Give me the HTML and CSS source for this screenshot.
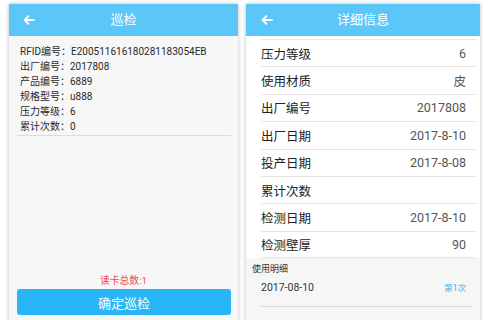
FILE: index.html
```html
<!DOCTYPE html>
<html lang="zh">
<head>
<meta charset="utf-8">
<link rel="stylesheet" href="styles.css">
</head>
<body>
<div class="screens">
  <section class="phone phone-left">
    <header class="bar">
      <span class="back"><svg width="12" height="10" viewBox="0 0 12 10"><path d="M11 5H1.6M5.4 1.2L1.6 5l3.8 3.8" fill="none" stroke="#fff" stroke-width="1.8" stroke-linecap="round" stroke-linejoin="round"/></svg></span>
      <span class="title">巡检</span>
      <span></span>
    </header>
    <div class="info">
      <p>RFID编号<span class="colon">：</span>E200511616180281183054EB</p>
      <p>出厂编号<span class="colon">：</span>2017808</p>
      <p>产品编号<span class="colon">：</span>6889</p>
      <p>规格型号<span class="colon">：</span>u888</p>
      <p>压力等级<span class="colon">：</span>6</p>
      <p>累计次数<span class="colon">：</span>0</p>
    </div>
    <div class="divider"></div>
    <div class="spacer"></div>
    <p class="count">读卡总数:1</p>
    <button class="confirm">确定巡检</button>
  </section>

  <section class="phone phone-right">
    <header class="bar">
      <span class="back"><svg width="12" height="10" viewBox="0 0 12 10"><path d="M11 5H1.6M5.4 1.2L1.6 5l3.8 3.8" fill="none" stroke="#fff" stroke-width="1.8" stroke-linecap="round" stroke-linejoin="round"/></svg></span>
      <span class="title">详细信息</span>
      <span></span>
    </header>
    <div class="rows">
      <div class="row"><span class="label">压力等级</span><span class="value">6</span></div>
      <div class="row"><span class="label">使用材质</span><span class="value">皮</span></div>
      <div class="row"><span class="label">出厂编号</span><span class="value">2017808</span></div>
      <div class="row"><span class="label">出厂日期</span><span class="value">2017-8-10</span></div>
      <div class="row"><span class="label">投产日期</span><span class="value">2017-8-08</span></div>
      <div class="row"><span class="label">累计次数</span><span class="value"></span></div>
      <div class="row"><span class="label">检测日期</span><span class="value">2017-8-10</span></div>
      <div class="row"><span class="label">检测壁厚</span><span class="value">90</span></div>
    </div>
    <div class="usage">
      <p class="usage-title">使用明细</p>
      <div class="record"><span class="date">2017-08-10</span><span class="times">第1次</span></div>
    </div>
  </section>
</div>
</body>
</html>
```
FILE: styles.css
```css
* { box-sizing: border-box; }
html, body {
  margin: 0;
  padding: 0;
  width: 489px;
  height: 320px;
  overflow: hidden;
  background: #fff;
  font-family: Roboto, "Noto Sans CJK SC", sans-serif;
}
p { margin: 0; }

.screens {
  display: flex;
  align-items: flex-start;
  gap: 8px;
  padding: 4px 0 0 9px;
}

.phone {
  height: 330px;
  display: flex;
  flex-direction: column;
  box-shadow: 0 0 4px rgba(0, 0, 0, 0.28);
}
.phone-left {
  width: 229px;
  background: #f7f7f7;
  padding-bottom: 19px;
}
.phone-right { width: 234px; background: #fff; }

.bar {
  height: 32px;
  flex: none;
  background: #5bc7f9;
  display: grid;
  grid-template-columns: 1fr auto 1fr;
  align-items: center;
  color: #fff;
}
.back {
  display: flex;
  align-items: center;
  padding-left: 14px;
}
.phone-right .back { padding-left: 15px; }
.title {
  font-size: 13px;
  line-height: 16px;
}

.info {
  padding: 8px 0 0 11px;
  font-size: 10px;
  line-height: 15px;
  color: #2a2a2a;
}
.colon {
  font-family: "Noto Sans CJK TC", sans-serif;
  line-height: 0;
}
.divider {
  height: 1px;
  flex: none;
  margin: 0.5px 7px 0 8px;
  background: #dcdcdc;
}
.spacer { flex: 1; }
.count {
  text-align: center;
  font-size: 9.8px;
  line-height: 12px;
  color: #ef4b4b;
  margin-bottom: 2px;
}
.confirm {
  flex: none;
  margin: 0 7px 0 8px;
  height: 26px;
  border: 0;
  border-radius: 3px;
  background: #29b6f6;
  color: #fff;
  font-family: inherit;
  font-size: 13px;
  padding: 0;
}

.rows {
  margin: 3px 4px 0 15px;
}
.row {
  height: 27.4px;
  border-top: 1px solid #e4e4e4;
  display: flex;
  align-items: center;
  justify-content: space-between;
  padding-right: 10px;
}
.row:last-child { border-bottom: 1px solid #e4e4e4; }
.label {
  font-size: 12.5px;
  color: #222;
}
.value {
  font-size: 12.5px;
  color: #555;
}

.usage {
  flex: 1;
  background: #f6f6f6;
}
.usage-title {
  padding: 6px 0 0 6px;
  font-size: 9px;
  line-height: 11px;
  color: #333;
}
.record {
  margin: 0 7px 0 15px;
  padding: 7px 7px 12px 0;
  display: flex;
  justify-content: space-between;
  align-items: center;
  line-height: 12px;
  border-bottom: 1px solid #d8d8d8;
}
.date { font-size: 10.5px; color: #333; }
.times { font-size: 8.5px; color: #3db2ec; }
```
